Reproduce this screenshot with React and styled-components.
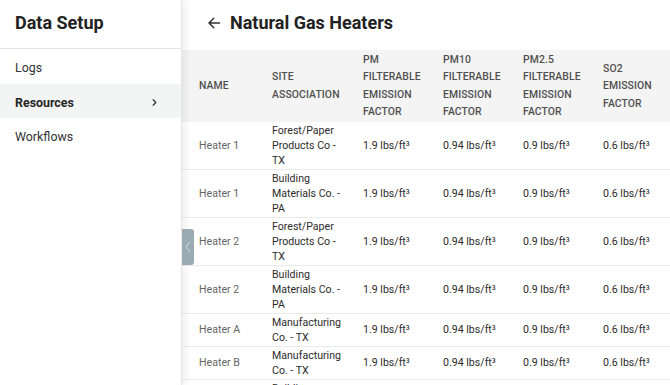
import React from "react";
import styled, { createGlobalStyle } from "styled-components";

const Global = createGlobalStyle`
  html, body { margin: 0; padding: 0; background: #fff; }
  body { font-family: Roboto, "Liberation Sans", Arial, sans-serif; color: #222; }
  * { box-sizing: border-box; }
`;

const Shell = styled.div`
  display: flex;
  width: 670px;
  height: 385px;
  overflow: hidden;
`;

const Sidebar = styled.aside`
  position: relative;
  z-index: 2;
  width: 182px;
  flex: none;
  background: #fff;
  border-right: 1px solid #e6e6e6;
  box-shadow: 3px 0 8px rgba(0, 0, 0, 0.07);
  display: flex;
  flex-direction: column;
`;

const SideTitle = styled.h1`
  margin: 0;
  height: 49px;
  display: flex;
  align-items: center;
  padding: 0 0 4px 15px;
  font-size: 18px;
  font-weight: 700;
  color: #222;
  border-bottom: 1px solid #e4e4e4;
`;

const NavItem = styled.div`
  height: ${(p) => (p.$active ? "34px" : "35px")};
  display: flex;
  align-items: center;
  justify-content: space-between;
  padding: 2px 22px 0 15px;
  font-size: 12.4px;
  font-weight: ${(p) => (p.$active ? 700 : 400)};
  color: ${(p) => (p.$active ? "#262626" : "#333")};
  background: ${(p) => (p.$active ? "#f3f4f4" : "transparent")};
`;

const Main = styled.main`
  position: relative;
  flex: 1;
  min-width: 0;
  overflow: hidden;
`;

const Header = styled.div`
  height: 50px;
  display: flex;
  align-items: center;
  gap: 9px;
  padding: 0 0 5px 25px;
`;

const PageTitle = styled.h2`
  margin: 0;
  font-size: 18px;
  font-weight: 700;
  color: #222;
`;

const CollapseTab = styled.div`
  position: absolute;
  left: 0;
  top: 229px;
  width: 12px;
  height: 36px;
  background: #9aabb3;
  border-radius: 0 3px 3px 0;
  display: flex;
  align-items: center;
  justify-content: center;
  z-index: 3;
`;

const Table = styled.table`
  border-collapse: collapse;
  table-layout: fixed;
  width: 504px;
`;

const Th = styled.th`
  background: #f4f4f4;
  text-align: left;
  vertical-align: middle;
  font-size: 10.4px;
  font-weight: 500;
  color: #505050;
  line-height: 17.4px;
  letter-spacing: 0.1px;
  padding: 1px ${(p) => p.$pr || 6}px 1px 17px;
  text-transform: uppercase;
`;

const Td = styled.td`
  vertical-align: middle;
  font-size: 10.6px;
  line-height: 15px;
  color: ${(p) => (p.$muted ? "#666" : "#2b2b2b")};
  padding: 1px 6px 1px 17px;
  border-bottom: 1px solid #ebebeb;
`;

const rows = [
  ["Heater 1", "Forest/Paper Products Co - TX"],
  ["Heater 1", "Building Materials Co. - PA"],
  ["Heater 2", "Forest/Paper Products Co - TX"],
  ["Heater 2", "Building Materials Co. - PA"],
  ["Heater A", "Manufacturing Co. - TX"],
  ["Heater B", "Manufacturing Co. - TX"],
  ["Heater C", "Building Materials Co. - PA"],
];

const ChevronRight = () => (
  <svg width="9" height="9" viewBox="0 0 10 10" fill="none">
    <path d="M3.5 2 L6.5 5 L3.5 8" stroke="#333" strokeWidth="1.4" strokeLinecap="round" strokeLinejoin="round" />
  </svg>
);

const ArrowLeft = () => (
  <svg width="14" height="14" viewBox="0 0 14 14" fill="none">
    <path d="M12.5 7 H2 M6.8 2.2 L2 7 L6.8 11.8" stroke="#333" strokeWidth="1.5" strokeLinecap="round" strokeLinejoin="round" />
  </svg>
);

const TabChevron = () => (
  <svg width="8" height="14" viewBox="0 0 8 14" fill="none">
    <path d="M6 2 L2 7 L6 12" stroke="#d4dde1" strokeWidth="1" strokeLinecap="round" strokeLinejoin="round" />
  </svg>
);

export default function App() {
  return (
    <>
      <Global />
      <Shell>
        <Sidebar>
          <SideTitle>Data Setup</SideTitle>
          <NavItem>Logs</NavItem>
          <NavItem $active>
            Resources
            <ChevronRight />
          </NavItem>
          <NavItem>Workflows</NavItem>
        </Sidebar>
        <Main>
          <CollapseTab>
            <TabChevron />
          </CollapseTab>
          <Header>
            <ArrowLeft />
            <PageTitle>Natural Gas Heaters</PageTitle>
          </Header>
          <Table>
            <colgroup>
              <col style={{ width: 73 }} />
              <col style={{ width: 91 }} />
              <col style={{ width: 80 }} />
              <col style={{ width: 80 }} />
              <col style={{ width: 80 }} />
              <col style={{ width: 100 }} />
            </colgroup>
            <thead>
              <tr>
                <Th>Name</Th>
                <Th>Site Association</Th>
                <Th>PM Filterable Emission Factor</Th>
                <Th>PM10 Filterable Emission Factor</Th>
                <Th>PM2.5 Filterable Emission Factor</Th>
                <Th $pr={30}>SO2 Emission Factor</Th>
              </tr>
            </thead>
            <tbody>
              {rows.map(([name, site], i) => (
                <tr key={i}>
                  <Td $muted>{name}</Td>
                  <Td>{site}</Td>
                  <Td>1.9 lbs/ft³</Td>
                  <Td>0.94 lbs/ft³</Td>
                  <Td>0.9 lbs/ft³</Td>
                  <Td>0.6 lbs/ft³</Td>
                </tr>
              ))}
            </tbody>
          </Table>
        </Main>
      </Shell>
    </>
  );
}
